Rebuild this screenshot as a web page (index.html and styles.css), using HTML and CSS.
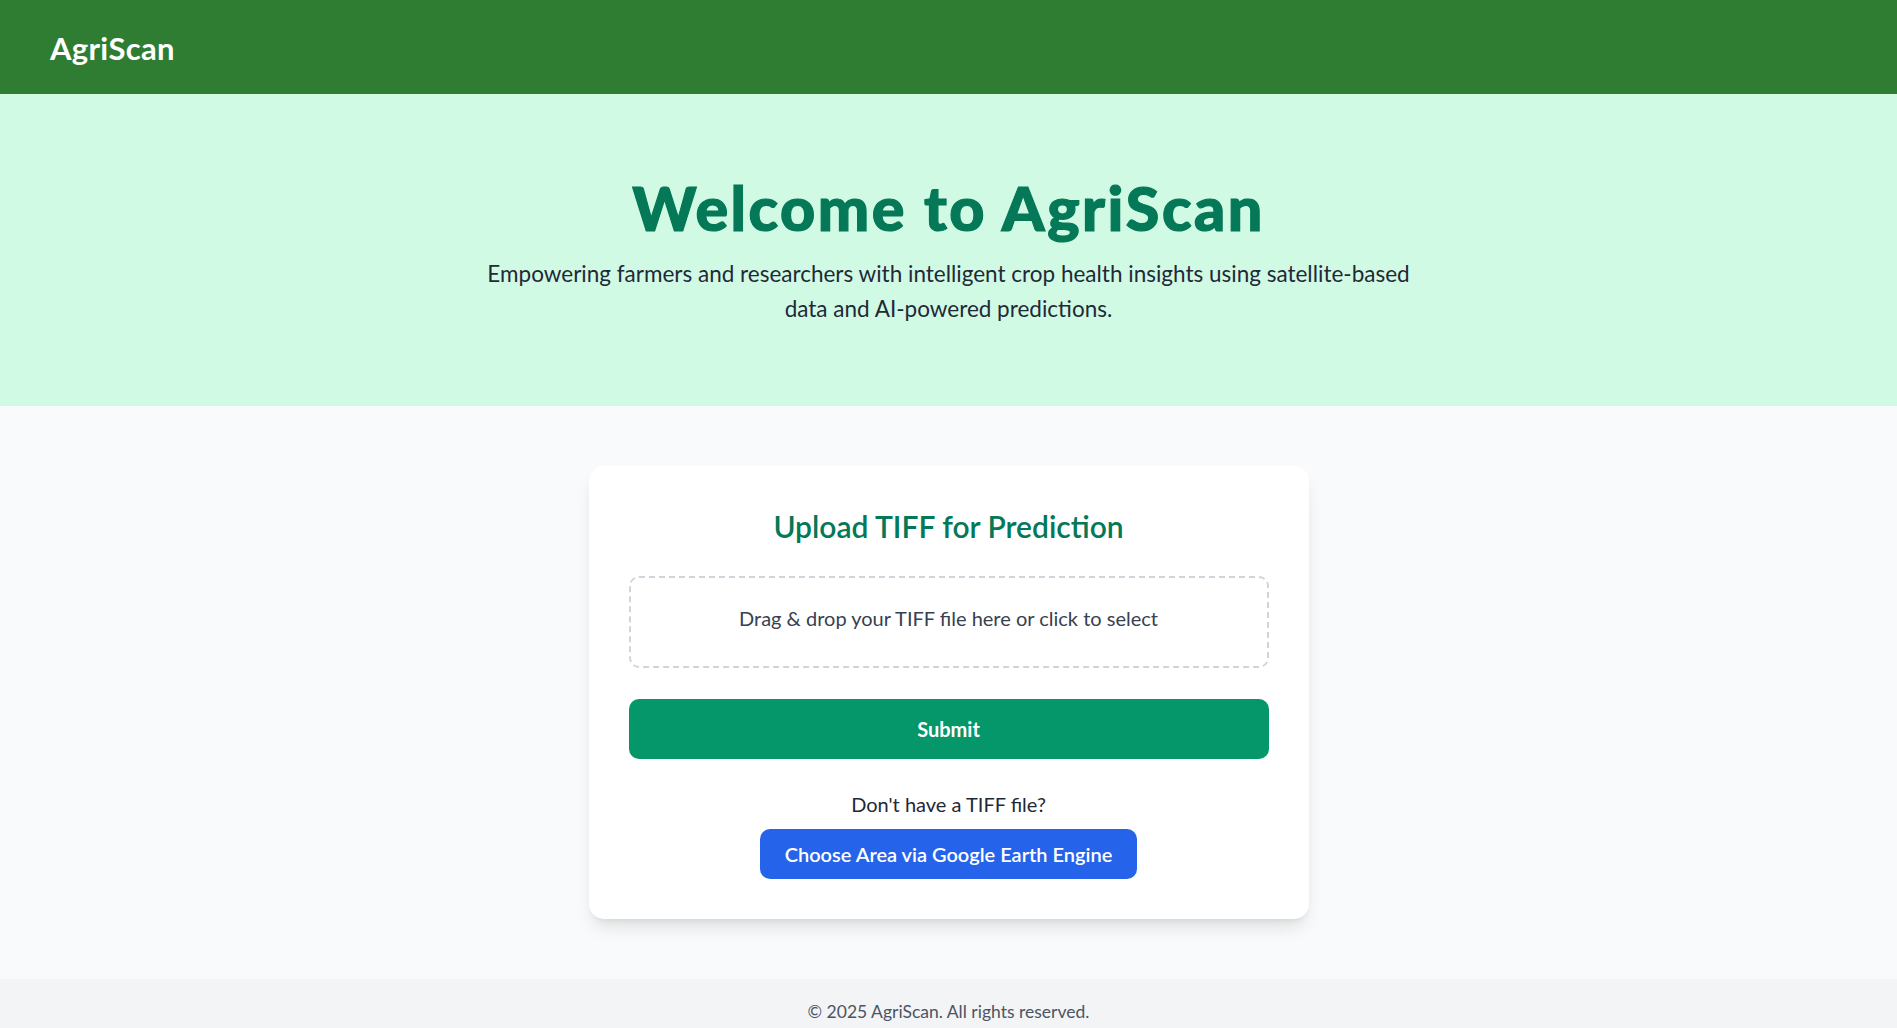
FILE: index.html
```html
<!DOCTYPE html>
<html lang="en">
<head>
<meta charset="utf-8">
<title>AgriScan</title>
<link rel="stylesheet" href="styles.css">
</head>
<body>
  <header class="topbar">
    <div class="logo">AgriScan</div>
  </header>
  <section class="hero">
    <h1 class="hero-title">Welcome to AgriScan</h1>
    <p class="hero-text">Empowering farmers and researchers with intelligent crop health insights using satellite-based data and AI-powered predictions.</p>
  </section>
  <main class="main">
    <div class="card">
      <h2 class="card-title">Upload TIFF for Prediction</h2>
      <div class="dropzone">Drag &amp; drop your TIFF file here or click to select</div>
      <button class="btn-submit">Submit</button>
      <p class="alt-text">Don't have a TIFF file?</p>
      <button class="btn-gee">Choose Area via Google Earth Engine</button>
    </div>
  </main>
  <footer class="footer">© 2025 AgriScan. All rights reserved.</footer>
</body>
</html>
```

FILE: styles.css
```css
* { box-sizing: border-box; }
html, body { margin: 0; padding: 0; }
body {
  font-family: Lato, "Open Sans", "Noto Sans", sans-serif;
  background: #f9fafb;
  color: #1f2937;
}
.topbar {
  height: 94px;
  background: #2e7d32;
  display: flex;
  align-items: center;
  padding: 0 50px;
}
.logo {
  color: #ffffff;
  font-size: 31px;
  font-weight: 700;
  line-height: 40px;
  letter-spacing: 0.3px;
  padding-top: 2px;
}
.hero {
  background: #d1fae5;
  padding: 80px 20px 80px;
  text-align: center;
}
.hero-title {
  margin: 0 0 20px;
  padding-top: 4px;
  font-family: "Lato Black", Lato, sans-serif;
  font-size: 61px;
  line-height: 60px;
  font-weight: 900;
  letter-spacing: 2.5px;
  -webkit-text-stroke: 1.2px #047857;
  color: #047857;
}
.hero-text {
  margin: -2px auto 0;
  max-width: 960px;
  font-size: 22.5px;
  line-height: 35px;
  color: #1f2937;
}
.main {
  padding: 60px 20px 60px;
  display: flex;
  justify-content: center;
}
.card {
  width: 720px;
  background: #ffffff;
  border-radius: 15px;
  box-shadow: 0 12px 18px -4px rgba(0,0,0,0.1), 0 5px 8px -5px rgba(0,0,0,0.1);
  padding: 40px;
  display: flex;
  flex-direction: column;
  align-items: center;
}
.card-title {
  margin: 0 0 30px;
  font-size: 30px;
  line-height: 40px;
  font-weight: 600;
  color: #047857;
}
.dropzone {
  width: 100%;
  height: 92px;
  padding-bottom: 8px;
  border: 2.5px dashed #d1d5db;
  border-radius: 10px;
  display: flex;
  align-items: center;
  justify-content: center;
  font-size: 20px;
  color: #374151;
}
.btn-submit {
  margin-top: 31px;
  width: 100%;
  height: 60px;
  border: none;
  border-radius: 10px;
  background: #059669;
  color: #ffffff;
  font-family: inherit;
  font-size: 20px;
  font-weight: 700;
}
.alt-text {
  margin: 30px 0 0;
  font-size: 20px;
  line-height: 30px;
  color: #1f2937;
}
.btn-gee {
  margin-top: 10px;
  height: 50px;
  padding: 0 25px;
  border: none;
  border-radius: 10px;
  background: #2563eb;
  color: #ffffff;
  font-family: inherit;
  font-size: 20px;
  font-weight: 600;
}
.footer {
  background: #f3f4f6;
  text-align: center;
  padding: 20px 0;
  font-size: 17.5px;
  line-height: 25px;
  color: #4b5563;
}
```
